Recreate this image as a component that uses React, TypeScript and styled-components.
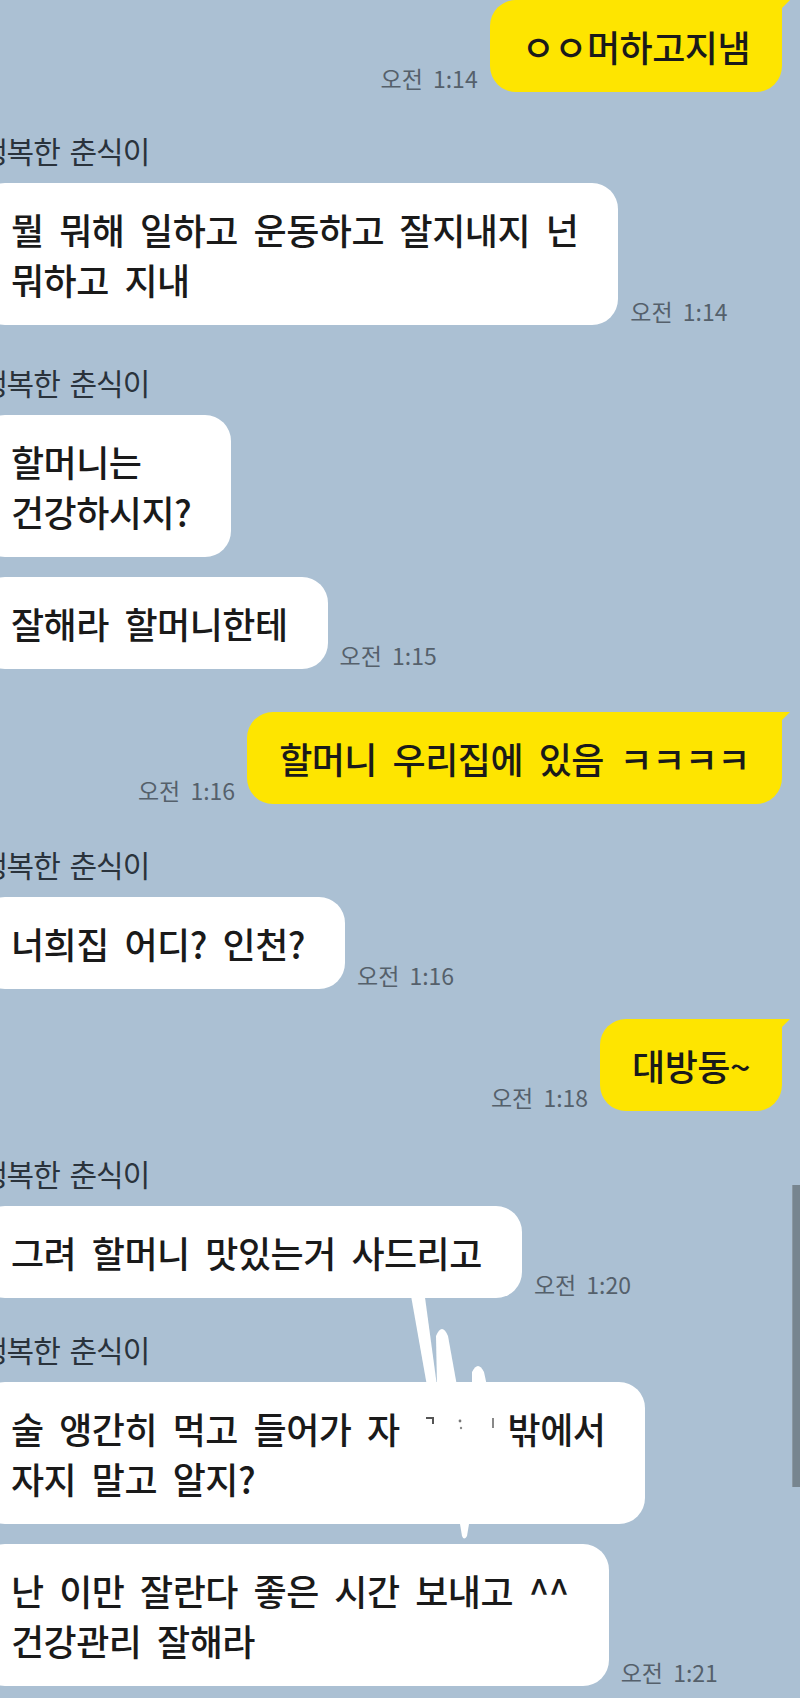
import React from "react";
import styled, { createGlobalStyle } from "styled-components";

const Global = createGlobalStyle`
  html, body {
    margin: 0;
    padding: 0;
    background: #abc0d3;
  }
  body {
    width: 800px;
    height: 1698px;
    overflow: hidden;
    font-family: "Noto Sans CJK KR", "Noto Sans", sans-serif;
  }
`;

const Screen = styled.div`
  position: relative;
  width: 800px;
  height: 1698px;
  box-sizing: border-box;
  padding: 0 18px 0 0;
  overflow: hidden;
  background: #abc0d3;
  display: flex;
  flex-direction: column;
`;

const SentRow = styled.div<{ $mt: number }>`
  display: flex;
  flex-direction: row;
  justify-content: flex-end;
  align-items: flex-end;
  gap: 12px;
  margin-top: ${(p) => p.$mt}px;
`;

const Group = styled.div<{ $mt: number }>`
  display: flex;
  flex-direction: column;
  align-items: flex-start;
  margin-top: ${(p) => p.$mt}px;
  margin-left: -21px;
`;

const Name = styled.div`
  font-size: 30px;
  line-height: 34px;
  font-weight: 400;
  letter-spacing: -1px;
  word-spacing: 4px;
  color: #2a333c;
  margin-bottom: 16px;
  padding-left: 1px;
`;

const Stack = styled.div`
  display: flex;
  flex-direction: column;
  align-items: flex-start;
  gap: 20px;
`;

const RecvRow = styled.div`
  display: flex;
  flex-direction: row;
  align-items: flex-end;
  gap: 12px;
`;

const Bubble = styled.div<{ $sent?: boolean }>`
  position: relative;
  box-sizing: border-box;
  padding: ${(p) => (p.$sent ? "21px 32px" : "21px 40px 21px 32px")};
  font-size: 36px;
  line-height: 50px;
  font-weight: 500;
  letter-spacing: -0.5px;
  word-spacing: 8px;
  color: #1a1a1a;
  white-space: nowrap;
  background: ${(p) => (p.$sent ? "#fee500" : "#ffffff")};
  border-radius: ${(p) => (p.$sent ? "26px 8px 26px 26px" : "26px")};

  ${(p) =>
    p.$sent
      ? `
  &::after {
    content: "";
    position: absolute;
    top: 0;
    right: -8px;
    width: 22px;
    height: 22px;
    background: #fee500;
    clip-path: polygon(0 0, 100% 0, 0 100%);
  }
  `
      : ""}
`;

const Line = styled.div`
  display: block;
`;

const Gap = styled.span<{ $w: number }>`
  display: inline-block;
  width: ${(p) => p.$w}px;
`;

const Time = styled.div`
  font-size: 23px;
  line-height: 26px;
  letter-spacing: 0;
  word-spacing: 5px;
  color: #55606b;
  white-space: nowrap;
  margin-bottom: 1px;
`;

const Scrollbar = styled.div`
  position: absolute;
  right: 0;
  top: 1185px;
  width: 7px;
  height: 302px;
  background: #77858f;
  border-left: 1px solid #8b98a2;
`;

const Scribble = styled.svg`
  position: absolute;
  left: 400px;
  top: 1290px;
  width: 100px;
  height: 260px;
  pointer-events: none;
  overflow: visible;
`;

type RecvBubble = { lines: React.ReactNode[]; time?: string };
type Item =
  | { kind: "sent"; mt: number; text: string; time: string }
  | { kind: "recv"; mt: number; bubbles: RecvBubble[] };

const NAME = "행복한 춘식이";

const items: Item[] = [
  { kind: "sent", mt: 0, text: "ㅇㅇ머하고지냄", time: "오전 1:14" },
  {
    kind: "recv",
    mt: 41,
    bubbles: [
      {
        lines: ["뭘 뭐해 일하고 운동하고 잘지내지 넌", "뭐하고 지내"],
        time: "오전 1:14",
      },
    ],
  },
  {
    kind: "recv",
    mt: 40,
    bubbles: [
      { lines: ["할머니는", "건강하시지?"] },
      { lines: ["잘해라 할머니한테"], time: "오전 1:15" },
    ],
  },
  { kind: "sent", mt: 43, text: "할머니 우리집에 있음 ㅋㅋㅋㅋ", time: "오전 1:16" },
  {
    kind: "recv",
    mt: 43,
    bubbles: [{ lines: ["너희집 어디? 인천?"], time: "오전 1:16" }],
  },
  { kind: "sent", mt: 30, text: "대방동~", time: "오전 1:18" },
  {
    kind: "recv",
    mt: 45,
    bubbles: [{ lines: ["그려 할머니 맛있는거 사드리고"], time: "오전 1:20" }],
  },
  {
    kind: "recv",
    mt: 34,
    bubbles: [
      {
        lines: [
          <>
            술 앵간히 먹고 들어가 자<Gap $w={108} />밖에서
          </>,
          "자지 말고 알지?",
        ],
      },
      {
        lines: ["난 이만 잘란다 좋은 시간 보내고 ^^", "건강관리 잘해라"],
        time: "오전 1:21",
      },
    ],
  },
];

export default function App() {
  return (
    <>
      <Global />
      <Screen>
        {items.map((it, i) =>
          it.kind === "sent" ? (
            <SentRow key={i} $mt={it.mt}>
              <Time>{it.time}</Time>
              <Bubble $sent>{it.text}</Bubble>
            </SentRow>
          ) : (
            <Group key={i} $mt={it.mt}>
              <Name>{NAME}</Name>
              <Stack>
                {it.bubbles.map((b, j) => (
                  <RecvRow key={j}>
                    <Bubble>
                      {b.lines.map((l, k) => (
                        <Line key={k}>{l}</Line>
                      ))}
                    </Bubble>
                    {b.time && <Time>{b.time}</Time>}
                  </RecvRow>
                ))}
              </Stack>
            </Group>
          )
        )}
        <Scribble viewBox="0 0 100 260">
          <path d="M10 0 L24 0 L37 96 L27 96 Z" fill="#ffffff" />
          <path d="M37 96 L36 46 Q42 32 48 46 L57 96 Z" fill="#ffffff" />
          <path d="M72 96 L72 82 Q78 70 84 82 L87 96 Z" fill="#ffffff" />
          <path d="M60 234 L69 234 L67 246 Q64 251 62 246 Z" fill="#ffffff" />
          <rect x="26" y="127" width="8" height="2" fill="#555" />
          <rect x="32" y="127" width="2" height="7" fill="#555" />
          <circle cx="60" cy="131" r="1.4" fill="#777" />
          <circle cx="61" cy="138" r="1.2" fill="#888" />
          <rect x="92" y="128" width="2" height="10" fill="#888" />
        </Scribble>
        <Scrollbar />
      </Screen>
    </>
  );
}
